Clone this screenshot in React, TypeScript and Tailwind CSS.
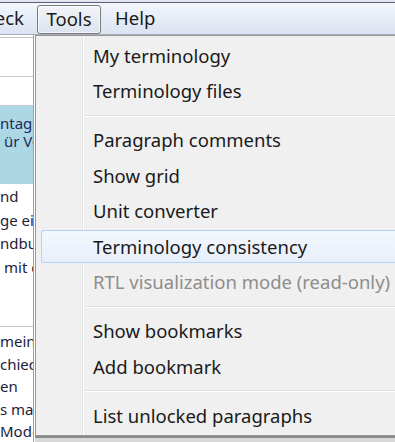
import React from "react";

const font = { fontFamily: '"Noto Sans", "Open Sans", sans-serif' };

function Item({ label, disabled, active }: { label: string; disabled?: boolean; active?: boolean }) {
  return (
    <div className="h-[35.5px] flex items-center pl-[5px]">
      <div
        className={
          "h-[33px] flex-1 flex items-center pl-[51px] rounded-l-[3px] " +
          (active
            ? "border border-r-0 border-[#b4d2f5] bg-gradient-to-b from-[#f4f8fe] to-[#e7effb]"
            : "border border-transparent")
        }
      >
        <span className={"text-[18.5px] whitespace-nowrap " + (disabled ? "text-[#8d8d8d]" : "text-[#1a1a1a]")}>
          {label}
        </span>
      </div>
    </div>
  );
}

function Sep() {
  return (
    <div className="h-[13.5px] flex flex-col justify-center pl-[48px]">
      <div className="h-[1px] bg-[#e0e0e0]" />
      <div className="h-[1px] bg-white" />
    </div>
  );
}

export default function App() {
  return (
    <div className="w-[395px] h-[442px] overflow-hidden bg-white flex flex-col" style={font}>
      {/* menubar */}
      <div className="h-[35px] flex flex-col shrink-0">
        <div className="h-[2px] bg-[#e4e4ee]" />
        <div className="h-[1px] bg-[#5d5a7e]" />
        <div className="flex-1 bg-gradient-to-b from-[#f3f6fc] to-[#dbe3f1] flex items-center">
          <div className="w-[24px] overflow-hidden flex justify-end">
            <span className="text-[18.5px] text-[#1a1a1a] leading-none whitespace-nowrap">Check</span>
          </div>
          <div className="ml-[13px] w-[64px] h-[29px] mt-[2px] rounded-[3px] border border-[#7a7a7a] bg-gradient-to-b from-[#f2f4f8] to-[#dde3ee] flex items-center justify-center shadow-[inset_0_0_0_1px_rgba(255,255,255,0.7)]">
            <span className="text-[18.5px] text-[#1a1a1a] leading-none">Tools</span>
          </div>
          <span className="ml-[14px] text-[18.5px] text-[#1a1a1a] leading-none">Help</span>
        </div>
        <div className="h-[1px] bg-[#a9afbb]" />
      </div>

      <div className="flex-1 flex min-h-0">
        {/* left document column */}
        <div className="w-[35px] shrink-0 flex flex-col">
          <div className="w-[34px] border-r border-[#a0a0a0] flex-1 flex flex-col text-[#1d1d3a] text-[15px]">
            <div className="h-[3px] border-b border-[#c8c8c8]" />
            <div className="h-[39px] border-b border-[#c8c8c8]" />
            <div className="h-[29px] border-b border-[#c8c8c8]" />
            <div className="h-[78px] bg-[#acd8e6] overflow-hidden pt-[8px] leading-[18px] text-[#1d2a5a] whitespace-nowrap">
              <div>ntage</div>
              <div className="pl-[4px]">ür Vo</div>
            </div>
            <div className="h-[143px] border-b border-[#c8c8c8] overflow-hidden pt-[1px] leading-[23.5px] whitespace-nowrap">
              <div>nd</div>
              <div>ge ein</div>
              <div>ndbuch</div>
              <div className="pl-[4px]">mit de</div>
            </div>
            <div className="flex-1 overflow-hidden pt-[3px] leading-[22.5px] whitespace-nowrap">
              <div>meinen</div>
              <div>chieden</div>
              <div>en</div>
              <div>s man</div>
              <div>Modell</div>
            </div>
          </div>
        </div>

        {/* dropdown menu */}
        <div className="flex-1 flex flex-col">
          <div className="h-[401px] border border-r-0 border-[#979797] bg-[#f0f0f0] relative flex flex-col pt-[2px]">
            <div className="absolute left-[46px] top-0 bottom-0 w-[2px] flex">
              <div className="w-[1px] bg-[#e2e3e3]" />
              <div className="w-[1px] bg-white" />
            </div>
            <div className="relative flex flex-col">
              <Item label="My terminology" />
              <Item label="Terminology files" />
              <Sep />
              <Item label="Paragraph comments" />
              <Item label="Show grid" />
              <Item label="Unit converter" />
              <Item label="Terminology consistency" active />
              <Item label="RTL visualization mode (read-only)" disabled />
              <Sep />
              <Item label="Show bookmarks" />
              <Item label="Add bookmark" />
              <Sep />
              <Item label="List unlocked paragraphs" />
            </div>
          </div>
          <div className="h-[2px] bg-[#8a8a8a]" />
          <div className="flex-1 bg-[#d8d8d8]" />
        </div>
      </div>
    </div>
  );
}
